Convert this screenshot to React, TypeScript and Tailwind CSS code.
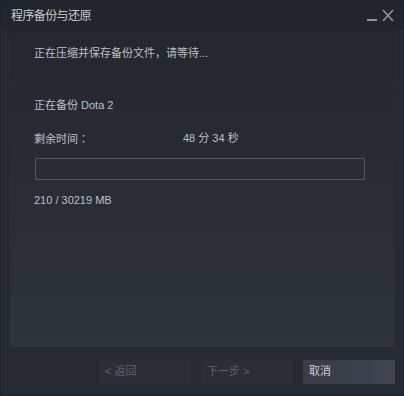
import React from "react";

const font = { fontFamily: '"Liberation Sans", Arial, "Noto Sans CJK SC", sans-serif' };
const tc = { fontFamily: '"Noto Sans CJK TC", sans-serif' };

export default function App() {
  return (
    <div
      className="w-[404px] h-[396px] flex flex-col bg-[#272a30] border border-[#1a2433] text-[11px] leading-[15px] text-[#bcc0c7] overflow-hidden"
      style={font}
    >
      <div className="h-[29px] shrink-0 flex items-center bg-[#22252b] pl-[10px] pr-[9px]">
        <div className="pt-[2px] text-[12px] text-[#c8ccd2] tracking-[-0.6px]">程序备份与还原</div>
        <div className="ml-auto flex items-center gap-[4px]">
          <svg width="12" height="14" viewBox="0 0 12 14">
            <rect x="1" y="10" width="10" height="2" fill="#8e9299" />
          </svg>
          <svg width="12" height="14" viewBox="0 0 12 14">
            <path d="M1 1 L11 12 M11 1 L1 12" stroke="#8e9299" strokeWidth="1.7" />
          </svg>
        </div>
      </div>
      <div className="mx-[9px] h-[317px] shrink-0 bg-gradient-to-b from-[#24272d] to-[#2f333a] pl-[24px] pt-[16px] flex flex-col">
        <div>正在压缩并保存备份文件，请等待...</div>
        <div className="mt-[37px]">正在备份 Dota 2</div>
        <div className="mt-[18px] flex">
          <div className="w-[149px]">
            剩余时间<span style={tc}>：</span>
          </div>
          <div>48 分 34 秒</div>
        </div>
        <div className="mt-[11px] ml-px w-[330px] h-[22px] border border-[#4d5466]" />
        <div className="mt-[13px]">210 / 30219 MB</div>
      </div>
      <div className="flex-1 flex items-center justify-end gap-[10px] pr-[8px] pt-[1px]">
        <div className="w-[92px] h-[24px] bg-[#2b2e34] text-[#5d6370] flex items-center pl-[6px]">&lt; 返回</div>
        <div className="w-[92px] h-[24px] bg-[#2b2e34] text-[#5d6370] flex items-center pl-[6px]">下一步 &gt;</div>
        <div className="w-[92px] h-[24px] bg-gradient-to-r from-[#373c46] to-[#3f4551] text-[#cdd0d6] flex items-center pl-[6px]">取消</div>
      </div>
    </div>
  );
}
